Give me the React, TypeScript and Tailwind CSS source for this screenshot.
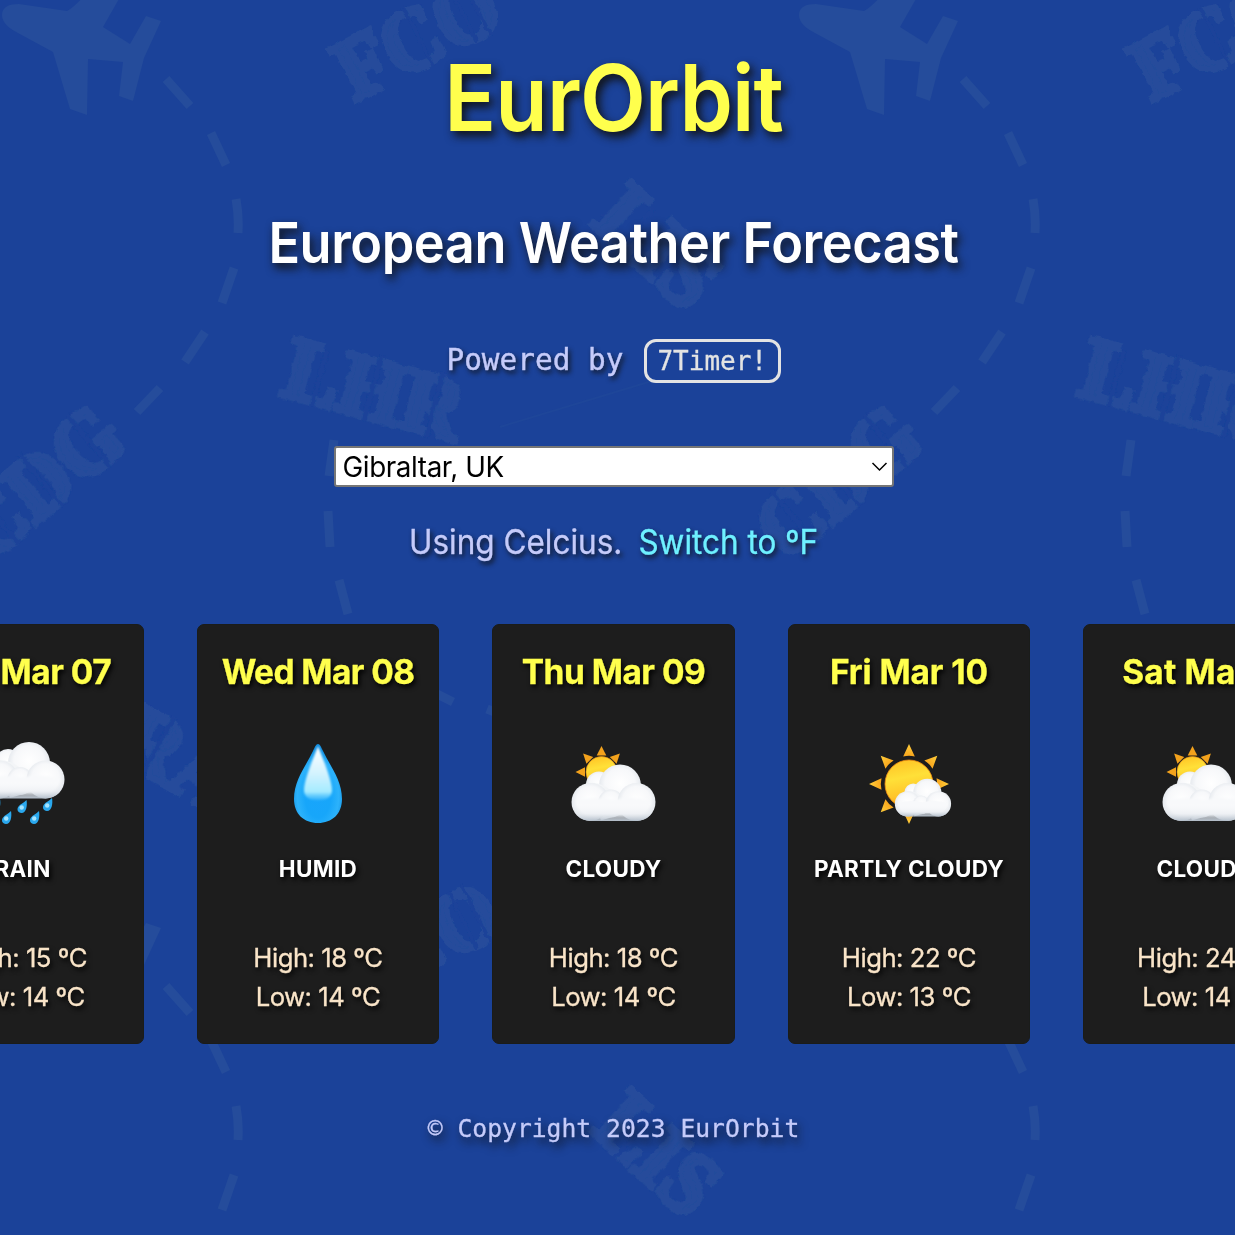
import React from "react";

type Icon = "rain" | "drop" | "cloudy" | "partly";

const days: { title: string; titleClass: string; icon: Icon; label: string; high: number; low: number }[] = [
  { title: "Tue Mar 07", titleClass: "tracking-[-0.5px]", icon: "rain", label: "RAIN", high: 15, low: 14 },
  { title: "Wed Mar 08", titleClass: "tracking-[-0.6px]", icon: "drop", label: "HUMID", high: 18, low: 14 },
  { title: "Thu Mar 09", titleClass: "tracking-[-0.5px]", icon: "cloudy", label: "CLOUDY", high: 18, low: 14 },
  { title: "Fri Mar 10", titleClass: "tracking-[-0.1px]", icon: "partly", label: "PARTLY CLOUDY", high: 22, low: 13 },
  { title: "Sat Mar 11", titleClass: "tracking-[0.2px]", icon: "cloudy", label: "CLOUDY", high: 24, low: 14 },
];

function Backdrop() {
  const bg = "#1b4299";
  return (
    <svg className="absolute inset-0 -z-10 h-full w-full" aria-hidden="true">
      <defs>
        <filter id="rough" x="-10%" y="-30%" width="120%" height="160%">
          <feTurbulence type="fractalNoise" baseFrequency="0.16" numOctaves="2" seed="4" />
          <feDisplacementMap in="SourceGraphic" scale="5" xChannelSelector="R" yChannelSelector="G" />
        </filter>
        <g id="tile">
          <path
            fill="#254c9b"
            d="M2 15C2 7 9 4 19 4L67 11C82 2 92 -14 102 -32L132 -24L103 27L130 44L146 16L161 21L144 58L133 101L119 96L123 62L88 59L87 115L70 109L53 52L18 33C8 28 2 22 2 15Z"
          />
          <path
            stroke="#254c9b"
            strokeWidth="9"
            fill="none"
            d="M166 79L190 106M211 133L226 165M236 199Q239 215 238 233M234 268L222 303M205 332L185 362M160 388L137 412M334 440L329 476M328 511L330 547M339 580L348 614M425 688L453 702M487 709L505 716"
          />
          <path d="M500 427L652 381" stroke="#254c9b" strokeOpacity="0.35" strokeWidth="2" />
          <g
            fill="#254c9b"
            stroke="#254c9b"
            strokeWidth="6"
            fontFamily="'Liberation Serif', serif"
            fontWeight="700"
            fontSize="88"
            filter="url(#rough)"
          >
            <g transform="translate(354 102) rotate(-27)">
              <text x="0" y="0" textLength="171" lengthAdjust="spacingAndGlyphs">FCO</text>
              <path d="M137 -62V2M152 -62V2M87 -62V4" stroke={bg} strokeWidth="3.500" />
            </g>
            <g transform="translate(590 223) rotate(43)">
              <text x="0" y="0" textLength="132" lengthAdjust="spacingAndGlyphs">LIS</text>
              <path d="M37 -54V4" stroke={bg} strokeWidth="4" />
            </g>
            <g transform="translate(279 394) rotate(15)">
              <text x="0" y="0" textLength="182" lengthAdjust="spacingAndGlyphs">LHR</text>
              <path d="M35 -54V4M89 -64V4M153 -64V4" stroke={bg} strokeWidth="4.500" />
            </g>
            <g transform="translate(-11 563) rotate(-40)">
              <text x="0" y="0" textLength="183" lengthAdjust="spacingAndGlyphs">CDG</text>
              <path d="M35 -64V4M93 -64V4M155 -64V4" stroke={bg} strokeWidth="4.500" />
            </g>
            <g transform="translate(70 730) rotate(30)">
              <text x="0" y="0" textLength="168" lengthAdjust="spacingAndGlyphs">FRA</text>
              <path d="M84 -64V4" stroke={bg} strokeWidth="4.500" />
            </g>
          </g>
        </g>
      </defs>
      <use href="#tile" />
      <use href="#tile" x="797" />
      <use href="#tile" y="907" />
      <use href="#tile" x="797" y="907" />
    </svg>
  );
}

function Defs() {
  return (
    <svg className="absolute h-0 w-0" aria-hidden="true">
      <defs>
        <radialGradient id="puff" cx="0.5" cy="0.45" r="0.6">
          <stop offset="0" stopColor="#ffffff" />
          <stop offset="0.6" stopColor="#f7f8fa" />
          <stop offset="0.85" stopColor="#e4e8ed" />
          <stop offset="1" stopColor="#c6ced8" />
        </radialGradient>
        <linearGradient id="base" x1="0" y1="0" x2="0" y2="1">
          <stop offset="0" stopColor="#ffffff" stopOpacity="0" />
          <stop offset="0.6" stopColor="#e6eaef" stopOpacity="0.5" />
          <stop offset="1" stopColor="#b4bfcb" />
        </linearGradient>
        <linearGradient id="sun" x1="0.4" y1="0" x2="0.6" y2="1">
          <stop offset="0" stopColor="#ffc526" />
          <stop offset="0.35" stopColor="#ffe038" />
          <stop offset="0.7" stopColor="#ffc52a" />
          <stop offset="1" stopColor="#fb9410" />
        </linearGradient>
        <linearGradient id="ray" x1="0" y1="0" x2="0" y2="1">
          <stop offset="0" stopColor="#ffcf3c" />
          <stop offset="1" stopColor="#f8a51c" />
        </linearGradient>
        <radialGradient id="water" cx="0.5" cy="0.66" r="0.6">
          <stop offset="0" stopColor="#18a5fb" />
          <stop offset="0.45" stopColor="#17a6fa" />
          <stop offset="0.72" stopColor="#2cb2fb" />
          <stop offset="1" stopColor="#0e8de0" />
        </radialGradient>
        <linearGradient id="shine" x1="0" y1="0" x2="0" y2="1">
          <stop offset="0" stopColor="#ffffff" />
          <stop offset="0.5" stopColor="#d4f3fe" />
          <stop offset="0.85" stopColor="#a5ebff" />
          <stop offset="1" stopColor="#4fc3fd" stopOpacity="0.5" />
        </linearGradient>
        <filter id="soft" x="-20%" y="-20%" width="140%" height="140%">
          <feGaussianBlur stdDeviation="0.9" />
        </filter>
        {/* Cloud, 85 wide, from y 19 to 75.5 */}
        <g id="cloud">
          <circle cx="28" cy="39" r="13" fill="url(#puff)" />
          <circle cx="49" cy="40" r="21" fill="url(#puff)" />
          <path d="M15 38Q30 34 46 50L60 66L30 75Z" fill="#f3f5f7" />
          <circle cx="19.500" cy="56.500" r="19" fill="url(#puff)" />
          <ellipse cx="40" cy="58" rx="13" ry="14" fill="url(#puff)" />
          <circle cx="65.500" cy="56.500" r="19" fill="url(#puff)" />
          <path d="M5 56Q20 50 42 54Q64 50 80 56Q76 71 60 71H25Q9 71 5 56Z" fill="#f8f9fb" filter="url(#soft)" />
          <path d="M0.500 56.500H84.500A19 19 0 0 1 65.500 75.500H19.500A19 19 0 0 1 0.500 56.500Z" fill="url(#base)" />
        </g>
        <path id="bead" d="M9 0C10 5 9 13 4 13C0 13 -1 9 1 6.500C3 4 6 3 9 0Z" fill="#2aa8ee" />
        <path id="spike" d="M0 -40L5.800 -27.500Q0 -29 -5.800 -27.500Z" fill="url(#ray)" />
      </defs>
    </svg>
  );
}

const beads = [
  [16, 63],
  [27, 75],
  [42.5, 64],
  [55, 75],
  [68, 62],
];

function WeatherIcon({ icon }: { icon: Icon }) {
  if (icon === "drop")
    return (
      <svg className="size-24" viewBox="0 0 96 96">
        <path d="M48 8C50 8 51 11 53 15C60 30 72 44 72 63C72 78 62 87 48 87C34 87 24 78 24 63C24 44 36 30 43 15C45 11 46 8 48 8Z" fill="url(#water)" />
        <path d="M48 10C50 16 62 43 62 54C62 61 57 64 48 64C39 64 34 61 34 54C34 43 46 16 48 10Z" fill="url(#shine)" filter="url(#soft)" />
      </svg>
    );
  if (icon === "rain")
    return (
      <svg className="size-24" viewBox="0 0 96 96">
        <use href="#cloud" x="5" y="-13" />
        {beads.map(([x, y]) => (
          <g key={x}>
            <use href="#bead" x={x} y={y} />
            <circle cx={x + 4.2} cy={y + 7.5} r="2.2" fill="#a5e4ff" />
          </g>
        ))}
      </svg>
    );
  if (icon === "cloudy")
    return (
      <svg className="size-24" viewBox="0 0 96 96">
        <g transform="translate(35.500 36)">
          {[-90, -45, 0, 45].map((a) => (
            <path key={a} d="M0 -26L4.800 -16.500H-4.800Z" fill="#f3a21c" transform={`rotate(${a})`} />
          ))}
          <circle r="15.500" fill="url(#sun)" stroke="#e58f14" strokeWidth="0.6" />
        </g>
        <use href="#cloud" x="5" y="9.500" />
      </svg>
    );
  return (
    <svg className="size-24" viewBox="0 0 96 96">
      <g transform="translate(48 48)">
        {[0, 45, 90, 180, 225, 270, 315].map((a) => (
          <use key={a} href="#spike" transform={`rotate(${a})`} />
        ))}
        <circle r="24" fill="url(#sun)" stroke="#f08c10" strokeWidth="0.8" />
      </g>
      <use href="#cloud" transform="translate(33.500 30) scale(0.67)" />
    </svg>
  );
}

export default function App() {
  return (
    <div className="relative isolate h-[1235px] w-full overflow-hidden bg-[#1b4299] pr-2 font-['Inter',sans-serif] text-[#c5cbfa]">
      <Backdrop />
      <Defs />
      <div className="flex flex-col items-center pt-[42px]">
        <h1 className="scale-x-[0.932] text-[92px] leading-[112px] font-semibold tracking-[-1px] text-[#ffff4d] [text-shadow:4px_5px_10px_#111]">EurOrbit</h1>
        <h2 className="mt-[55px] scale-x-[0.934] text-[56px] leading-[68px] font-semibold tracking-[-0.5px] whitespace-nowrap text-white [text-shadow:3px_5px_10px_#111]">
          European Weather Forecast
        </h2>
        <div className="mt-[62px] flex items-center gap-[20.500px] font-['DejaVu_Sans_Mono',monospace] text-[29.400px] leading-[37.500px]">
          <p className="[-webkit-text-stroke:0.4px] [text-shadow:2px_3px_5px_#111]">Powered by</p>
          <a className="rounded-xl border-3 border-[#e3e3e3] px-[10.500px] pt-px text-[26px] leading-[36.500px] text-[#e3e3e3] [-webkit-text-stroke:0.3px]">7Timer!</a>
        </div>
        <div className="relative mt-[63.500px] w-[560px]">
          <select className="block h-[40.500px] w-full appearance-none rounded-[3px] border-2 border-[#767676] bg-white pt-px pl-[7px] text-[27.800px] leading-9 tracking-[-0.4px] text-black">
            <option>Gibraltar, UK</option>
          </select>
          <svg className="pointer-events-none absolute top-4 right-1.5 h-[10px] w-[17px]" viewBox="0 0 17 10" fill="none" stroke="#000" strokeWidth="1.500">
            <path d="M1.500 1L8.500 8L15.500 1" />
          </svg>
        </div>
        <p className="mt-[33.500px] flex scale-x-[0.94] gap-[17px] text-[33.500px] leading-[44px] [-webkit-text-stroke:0.3px] [text-shadow:2px_3px_6px_#111]">
          <span>Using Celcius.</span>
          <a className="text-[#6ef0ff]">Switch to ºF</a>
        </p>
        <div className="mt-[59.500px] flex gap-[53px]">
          {days.map((d) => (
            <section
              key={d.title}
              className="flex h-[420px] w-[242.500px] shrink-0 flex-col items-center rounded-[7px] border border-[#1a1c1a] bg-[#1d1d1d] pt-[27px] whitespace-nowrap [text-shadow:2px_3px_5px_#000]"
            >
              <h3 className={`text-[33.500px] leading-10 font-bold text-[#ffff4d] [-webkit-text-stroke:0.3px] ${d.titleClass}`}>{d.title}</h3>
              <div className="mt-11">
                <WeatherIcon icon={d.icon} />
              </div>
              <p className="mt-[23px] text-[22.500px] leading-7 font-bold tracking-[0.3px] text-white">{d.label}</p>
              <div className="mt-[55px] text-center text-[25.700px] leading-[39px] tracking-[-0.500px] text-[#f9e4c8] [-webkit-text-stroke:0.3px]">
                <p>High: {d.high} ºC</p>
                <p>Low: {d.low} ºC</p>
              </div>
            </section>
          ))}
        </div>
        <footer className="mt-[70px] font-['DejaVu_Sans_Mono',monospace] text-[24.700px] leading-[30px] [-webkit-text-stroke:0.3px] [text-shadow:3px_5px_10px_#111]">
          © Copyright 2023 EurOrbit
        </footer>
      </div>
    </div>
  );
}
